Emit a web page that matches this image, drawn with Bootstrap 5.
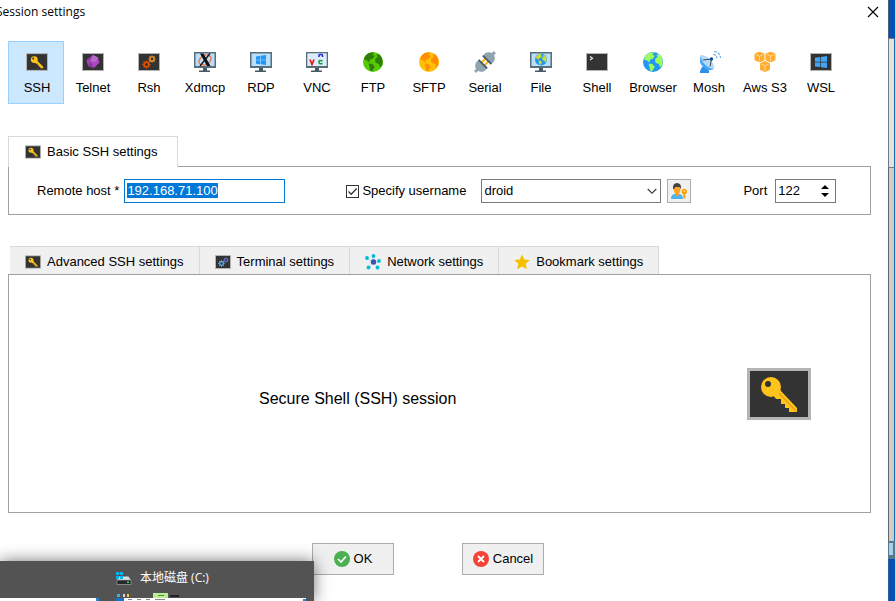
<!DOCTYPE html>
<html lang="en">
<head>
<meta charset="utf-8">
<meta name="viewport" content="width=device-width, initial-scale=1">
<title>Session settings</title>
<link href="https://cdn.jsdelivr.net/npm/bootstrap@5.3.0/dist/css/bootstrap.min.css" rel="stylesheet">
<style>
body { font: 13px/16px "Liberation Sans", Arial, sans-serif; color: #000; background: #fff; }
svg { display: block; flex: none; }
.title-bar { height: 24px; font: 12px/24px "Open Sans", "Noto Sans", sans-serif; padding-right: 9px; }
.title-text { margin-left: -4px; }
.plain-btn { border: 0; background: none; padding: 0; }
.session-bar { margin: 17px 8px 32px; }
.session-btn { width: 56px; height: 63px; border: 1px solid transparent; background: none; padding: 8px 0 0 2px; gap: 6px; color: #000; white-space: nowrap; }
.session-btn.active { background: #cce8ff; border-color: #99d1ff; }
.group { margin: 0 17px 0 8px; }
.tab-btn { border: 1px solid #d9d9d9; border-width: 1px 1px 0 0; background: #f0f0f0; color: #000; height: 28px; padding: 2px 15px 0 15px; gap: 6px; white-space: nowrap; }
.tab-btn.active { background: #fff; height: 31px; border-left-width: 1px; padding: 0 19px 0 16px; margin-bottom: -1px; z-index: 1; }
.panel { border: 1px solid #a0a0a0; background: #fff; }
.fields { padding: 12px 28px 11px; white-space: nowrap; }
.field { height: 24px; border: 1px solid #7a7a7a; border-radius: 0; font-size: 13px; line-height: 16px; color: #000; background-color: #fff; padding: 2px; box-shadow: none; }
.host { width: 161px; margin: 0 61px 0 5px; padding-bottom: 4px; }
.host:focus { border-color: #0078d7; box-shadow: none; }
.host::selection { background: #0078d7; color: #fff; }
.tick { appearance: none; width: 13px; height: 13px; margin: 0 3px 0 0; border: 1px solid #333; background: #fff url("data:image/svg+xml,%3Csvg xmlns='http://www.w3.org/2000/svg' viewBox='0 0 11 11'%3E%3Cpath d='M1.5 5.5l2.7 2.7L9.7 2.5' fill='none' stroke='%23333' stroke-width='1.3'/%3E%3C/svg%3E"); }
.user { width: 180px; margin: 0 6px 0 15px; background-image: url("data:image/svg+xml,%3Csvg xmlns='http://www.w3.org/2000/svg' viewBox='0 0 10 10'%3E%3Cpath d='M.7 3L5 7.2 9.3 3' fill='none' stroke='%23444' stroke-width='1.2'/%3E%3C/svg%3E"); background-size: 10px 10px; background-position: right 3px center; padding-left: 2px; }
.key-btn { width: 24px; height: 24px; border: 1px solid #adadad; background: #f0f0f0; padding: 3px; margin-right: 52px; }
.port { width: 61px; margin-left: 8px; padding: 0 6px 0 2px; }
.port input { width: 40px; border: 0; padding: 0; outline: 0; appearance: textfield; -moz-appearance: textfield; }
.port input::-webkit-inner-spin-button { display: none; }
.lower { margin-top: 31px; }
.lower-tabs { margin-left: 2px; }
.session-name { font-size: 16px; line-height: 20px; padding-left: 250px; padding-top: 10px; }
.session-art { margin-right: 59px; }
.actions { gap: 68px; padding: 30px 32px 26px 0; }
.action-btn { width: 82px; height: 32px; border: 1px solid #adadad; background: #f0f0f0; color: #000; gap: 4px; padding: 0; }
.preview { left: 0; bottom: 0; width: 314px; height: 40px; gap: 17px; padding-right: 8px; background: #535353; color: #fff; box-shadow: 0 0 16px rgba(0,0,0,.55); font: 12px/16px "Open Sans", "Noto Sans CJK SC", sans-serif; z-index: 3; }
.preview-body { min-width: 0; }
.preview-name { gap: 8px; height: 32px; padding-top: 2px; }
.first-thumb { width: 99px; height: 3px; background: #fff; border-right: 3px solid #2b82d0; }
.desk { width: 7px; background: #0550b5; }
.desk-top { height: 38px; border-left: 1px solid #4a5f80; }
.desk-a { height: 130px; background: #e2e2e2; border: solid #75797d; border-width: 1px 0 1px 1px; }
.desk-b { background: #cdcdcd; border-left: 1px solid #666; }
.desk-a, .desk-b { border-right: 1px solid #1d66a8; }
.desk-c { height: 18px; background: #a9cfe4; border: 1px solid #55788c; border-width: 2px 2px 4px 1px; }
.desk-d { height: 42px; border-left: 1px solid #2e5f9a; }
</style>
<script src="https://cdn.jsdelivr.net/npm/bootstrap@5.3.0/dist/js/bootstrap.bundle.min.js"></script>
</head>
<body>
<svg width="0" height="0" class="position-absolute" aria-hidden="true">
  <symbol id="key" viewBox="0 0 64 52"><rect x="1.5" y="1.5" width="61" height="49" fill="#333" stroke="#b4b4b4" stroke-width="3"/><path d="M33 22l17 18v4h-8v-4h-4v-4h-4v-5h-5l-3-4z" fill="#ffc41c"/><path d="M32 25l17 18" stroke="#e3a50f" stroke-width="1.5"/><circle cx="24" cy="19" r="10" fill="#ffc41c"/><circle cx="21" cy="16" r="3" fill="#333"/></symbol>
  <symbol id="screen" viewBox="0 0 24 24"><rect x="1.5" y="3.5" width="21" height="17" fill="#333" stroke="#b4b4b4"/></symbol>
  <symbol id="monitor" viewBox="0 0 24 24"><path d="M1 2h22v16H1z" fill="#566f7b"/><path d="M2.500 3.500h19v12.500h-19z" fill="#bbdefb"/><path d="M10 18h4v2.500h3V22H6v-1.500h4z" fill="#455a64"/></symbol>
  <symbol id="land" viewBox="0 0 24 24"><path d="M8 3l5-.8-1.500 2.800 2.500.8-2.500 3.200-2.500.5-.5 3-2.500-2L3 9.500C3.500 6.500 5.500 4 8 3zM7.500 13.500l4 .5 2.300 3L11 21.200l-2-.7-.5-3.500zM15.500 4.200l3 .3c2.500 2.500 3.700 6 3 10l-2.500 3-1-3.500-3.500-1.200-.5-3.800 2.500-2z"/></symbol>
  <symbol id="gear" viewBox="0 0 10 10"><circle cx="5" cy="5" r="2.600" fill="none" stroke="currentColor" stroke-width="1.600"/><path d="M5 .5v1.600M5 7.900v1.600M.5 5h1.600M7.900 5h1.600M1.800 1.800l1.200 1.200M7 7l1.200 1.200M8.200 1.800L7 3M3 7L1.800 8.200" stroke="currentColor" stroke-width="1.500"/></symbol>
  <symbol id="win" viewBox="0 0 12 12"><path d="M0 1.700L5.300 1v4.700H0zM6 .9L12 0v5.700H6zM0 6.400h5.300v4.700L0 10.400zM6 6.400h6V12l-6-.8z"/></symbol>
  <symbol id="cube" viewBox="0 0 10 10"><path d="M5 0l4.500 2v6L5 10 .5 8V2z" fill="#ffab2e"/><path d="M1.500 2.700L5 4.200l3.500-1.500M5 4.200v4.800" fill="none" stroke="#ffe0b0" stroke-width=".7"/></symbol>
</svg>

<div class="d-flex min-vh-100 overflow-hidden position-relative">
  <main class="d-flex flex-column flex-grow-1">
    <header class="title-bar d-flex justify-content-between align-items-center">
      <span class="title-text">Session settings</span>
      <button class="plain-btn" aria-label="Close"><svg width="12" height="12" viewBox="0 0 12 12"><path d="M1 1l10 10M11 1L1 11" stroke="#000" stroke-width="1.100"/></svg></button>
    </header>

    <nav class="session-bar d-flex" aria-label="Session type">
      <button class="session-btn active d-flex flex-column align-items-center"><svg width="22" height="24"><use href="#key" y="3" width="22" height="18"/></svg>SSH</button>
      <button class="session-btn d-flex flex-column align-items-center"><svg width="24" height="24"><use href="#screen"/><path d="M12 5l5 2.500 1.500 5L13 18l-6-2-1.500-6z" fill="#ab47bc"/><path d="M12 5l-3 6-3.500-1zM9 11l4 7-6-2z" fill="#8e35a8"/><path d="M12 5l5 2.500-2 4.500-6-1z" fill="#ba68c8"/></svg>Telnet</button>
      <button class="session-btn d-flex flex-column align-items-center"><svg width="24" height="24"><use href="#screen"/><use href="#gear" x="5" y="10" width="9" height="9" color="#e65100"/><use href="#gear" x="11" y="5" width="8" height="8" color="#fb9a1c"/></svg>Rsh</button>
      <button class="session-btn d-flex flex-column align-items-center"><svg width="24" height="24"><use href="#monitor"/><ellipse cx="12" cy="10" rx="6.500" ry="4.500" fill="none" stroke="#f0794e" stroke-width="1.400" transform="rotate(-30 12 10)"/><path d="M7 3.500h3.500l7 12.500H14z" fill="#111"/><path d="M17 3.500L7 16" stroke="#111" stroke-width="1.300"/></svg>Xdmcp</button>
      <button class="session-btn d-flex flex-column align-items-center"><svg width="24" height="24"><use href="#monitor"/><use href="#win" x="7" y="5" width="10" height="10" fill="#2196f3"/></svg>RDP</button>
      <button class="session-btn d-flex flex-column align-items-center"><svg width="24" height="24"><use href="#monitor"/><path d="M2.500 3.500h19V16h-19z" fill="#dcecf8"/><path d="M5 9.500l2 5 2-5" fill="none" stroke="#e51c23" stroke-width="1.700"/><path d="M14 7V5.500q0-1 1-1h1.500q1 0 1 1V7" fill="none" stroke="#2222e0" stroke-width="1.500"/><path d="M17.500 11q-3.500-1.500-3.500 1t3.500 1.500" fill="none" stroke="#159c3c" stroke-width="1.600"/></svg>VNC</button>
      <button class="session-btn d-flex flex-column align-items-center"><svg width="24" height="24"><circle cx="12" cy="12" r="10" fill="#56cc00"/><use href="#land" width="24" height="24" fill="#2f7d0c"/></svg>FTP</button>
      <button class="session-btn d-flex flex-column align-items-center"><svg width="24" height="24"><circle cx="12" cy="12" r="10" fill="#ffc107"/><use href="#land" width="24" height="24" fill="#ff8f00"/></svg>SFTP</button>
      <button class="session-btn d-flex flex-column align-items-center"><svg width="24" height="24"><g transform="rotate(-45 12 12)"><path d="M8 10h8M8 14h8" stroke="#ffb300" stroke-width="2"/><path d="M9 6H5Q1 8 1 10.500h-3v3h3Q1 16 5 18h4zM15 6h4q4 2 4 4.500h3v3h-3Q23 16 19 18h-4z" fill="#90a4ae"/><path d="M9 6v12M15 6v12" stroke="#455a64" stroke-width="1.800"/></g></svg>Serial</button>
      <button class="session-btn d-flex flex-column align-items-center"><svg width="24" height="24"><use href="#monitor"/><circle cx="12" cy="9.500" r="6" fill="#2196f3"/><use href="#land" x="5" y="2.500" width="14" height="14" fill="#cddc39"/></svg>File</button>
      <button class="session-btn d-flex flex-column align-items-center"><svg width="24" height="24"><use href="#screen"/><path d="M5 6.500l2.500 1.800L5 10" fill="none" stroke="#eee" stroke-width="1.200"/></svg>Shell</button>
      <button class="session-btn d-flex flex-column align-items-center"><svg width="24" height="24"><circle cx="12" cy="12" r="10" fill="#2196f3"/><use href="#land" width="24" height="24" fill="#9cfc5c"/></svg>Browser</button>
      <button class="session-btn d-flex flex-column align-items-center"><svg width="24" height="24"><path d="M5 17h5l2 4v2H3v-2z" fill="#2f8fe8"/><path d="M4 5L17 19Q11 22 6 17T4 5z" fill="#42a5f5"/><path d="M4 5Q9 5 13.500 10T17 19Q12 19 7.500 14T4 5z" fill="#b3daf9"/><path d="M6 10l8.500-1L13 16.500" fill="none" stroke="#37474f"/><circle cx="14.500" cy="9" r="1.700" fill="#0d47a1"/><path d="M16 4.500q3.500 0 4 4M17 1.500q6 .5 6.500 6.500" fill="none" stroke="#64a9e8" stroke-width="1.100" stroke-dasharray="3 1"/></svg>Mosh</button>
      <button class="session-btn d-flex flex-column align-items-center"><svg width="24" height="24"><use href="#cube" x="1" y="1.500" width="11" height="11"/><use href="#cube" x="12" y="1.500" width="11" height="11"/><use href="#cube" x="6.500" y="11" width="11" height="11"/></svg>Aws S3</button>
      <button class="session-btn d-flex flex-column align-items-center"><svg width="24" height="24"><use href="#screen"/><use href="#win" x="6" y="6" width="12" height="12" fill="#42a5f5"/></svg>WSL</button>
    </nav>

    <section class="group">
      <div class="d-flex" role="tablist">
        <button class="tab-btn active d-flex align-items-center position-relative" role="tab" aria-selected="true"><svg width="16" height="14"><use href="#key"/></svg>Basic SSH settings</button>
      </div>
      <form class="panel fields d-flex align-items-center">
        <label for="host">Remote host *</label>
        <input id="host" class="field form-control host flex-shrink-0" type="text" value="192.168.71.100">
        <input id="specify" class="tick flex-shrink-0" type="checkbox" checked>
        <label for="specify">Specify username</label>
        <select class="field form-select user flex-shrink-0" aria-label="Username"><option>droid</option></select>
        <button type="button" class="key-btn flex-shrink-0" aria-label="Manage users"><svg width="16" height="16" viewBox="0 0 16 16"><path d="M0 16q0-5 4-5h4q4 0 4 5z" fill="#4fb3f0"/><path d="M4 9h4v3l-2 1.500L4 12z" fill="#f29a2e"/><ellipse cx="6" cy="6" rx="3.500" ry="4.500" fill="#ffa726"/><path d="M2 6Q1.500 0 6 0t4 6L8.500 4h-4L3 6z" fill="#424242"/><circle cx="13.300" cy="8.500" r="2.700" fill="#ffa000"/><path d="M12.300 10h2v5.500h-2z" fill="#ffa000"/><circle cx="13.300" cy="8" r=".7" fill="#fff"/></svg></button>
        <label for="port">Port</label>
        <div class="field port d-flex align-items-center justify-content-between flex-shrink-0">
          <input id="port" type="number" value="122">
          <span class="d-flex flex-column gap-1">
            <button type="button" class="plain-btn" aria-label="Increase port"><svg width="8" height="4"><path d="M0 4l4-4 4 4z"/></svg></button>
            <button type="button" class="plain-btn" aria-label="Decrease port"><svg width="8" height="4"><path d="M0 0l4 4 4-4z"/></svg></button>
          </span>
        </div>
      </form>
    </section>

    <section class="group lower d-flex flex-column flex-grow-1">
      <div class="lower-tabs d-flex" role="tablist">
        <button class="tab-btn d-flex align-items-center" role="tab"><svg width="16" height="14"><use href="#key"/></svg>Advanced SSH settings</button>
        <button class="tab-btn d-flex align-items-center" role="tab"><svg width="16" height="14"><path d="M.5.5h15v13H.5z" fill="#333" stroke="#b4b4b4"/><use href="#gear" x="3" y="5" width="7" height="7" color="#64b5f6"/><use href="#gear" x="8" y="2" width="6" height="6" color="#6f74d8"/></svg>Terminal settings</button>
        <button class="tab-btn d-flex align-items-center" role="tab"><svg width="16" height="16"><path d="M8 8V2M8 8L2 4M8 8l6-1M8 8l-4 6M8 8l5 6" stroke="#9adce8" stroke-width=".8"/><circle cx="8.500" cy="8" r="2.700" fill="#3f51b5"/><g fill="#00bcd4"><circle cx="8.500" cy="2" r="1.900"/><circle cx="2" cy="4" r="1.900"/><circle cx="14" cy="7" r="1.900"/><circle cx="3.500" cy="13.500" r="1.900"/><circle cx="12.500" cy="13.500" r="1.900"/></g></svg>Network settings</button>
        <button class="tab-btn d-flex align-items-center" role="tab"><svg width="16" height="16"><path d="M8 .5l2.300 5 5.500.6-4.100 3.700 1.200 5.500L8 12.500l-4.900 2.800 1.200-5.500L.2 6.100l5.500-.6z" fill="#f5c000"/></svg>Bookmark settings</button>
      </div>
      <div class="panel flex-grow-1 d-flex align-items-center justify-content-between">
        <div class="session-name">Secure Shell (SSH) session</div>
        <svg class="session-art" width="64" height="52"><use href="#key"/></svg>
      </div>
    </section>

    <footer class="actions d-flex justify-content-center">
      <button class="action-btn d-flex align-items-center justify-content-center"><svg width="16" height="16"><circle cx="8" cy="8" r="8" fill="#4caf50"/><path d="M4 8l3 3 5-5.500" fill="none" stroke="#fff" stroke-width="1.700"/></svg>OK</button>
      <button class="action-btn d-flex align-items-center justify-content-center"><svg width="16" height="16"><circle cx="8" cy="8" r="8" fill="#f44336"/><path d="M5 5l6 6M11 5l-6 6" stroke="#fff" stroke-width="1.900"/></svg>Cancel</button>
    </footer>
  </main>

  <aside class="desk d-flex flex-column flex-shrink-0" aria-hidden="true">
    <div class="desk-top"></div><div class="desk-a"></div><div class="desk-b flex-grow-1"></div><div class="desk-c"></div><div class="desk-d"></div>
  </aside>

  <div class="preview position-absolute d-flex align-items-end">
    <div class="first-thumb flex-shrink-0"></div>
    <div class="preview-body flex-fill">
      <div class="preview-name d-flex align-items-center">
        <svg width="16" height="14"><path d="M0 1h3v3H0zM4 1h3v3H4zM0 5h3v3H0zM4 5h3v3H4z" fill="#00b4f0"/><path d="M3 5.500h9.500l2.500 4H1z" fill="#d8dde0"/><path d="M1 9h14v4H1z" fill="#25292b"/><path d="M1 9h14v4.500H1z" fill="none" stroke="#aaa" stroke-width=".6"/><path d="M0 1h3v3H0zM4 1h3v3H4zM0 5h3v3H0zM4 5h3v3H4z" fill="#00b4f0"/><path d="M11 10.500h2v1.500h-2z" fill="#28e060"/></svg>
        <span>本地磁盘 (C:)</span>
      </div>
      <svg width="100%" height="8"><path d="M0 5h190v3H0z" fill="#fff"/><path d="M0 5h8v3H0z" fill="#1473c5"/><path d="M37 0h15v5H37z" fill="#b9ee94"/><path d="M1 1h3v3H1z" fill="#31b5e5"/><path d="M7 1h2v3H7z" fill="#e8cfb8"/><path d="M11 1h2v3h-2z" fill="#f4c84a"/><path d="M42 2h6v1h-6z" fill="#5b8746"/><path d="M54 2h9v2h-9z" fill="#222"/><path d="M12 6h4v1h-4zM21 6h4v1h-4zM30 6h4v1h-4zM39 6h10v1H39z" fill="#888"/><path d="M187 6h3v2h-3z" fill="#2b82d0"/></svg>
    </div>
  </div>
</div>
<script>
document.getElementById('host').select();
</script>
</body>
</html>
